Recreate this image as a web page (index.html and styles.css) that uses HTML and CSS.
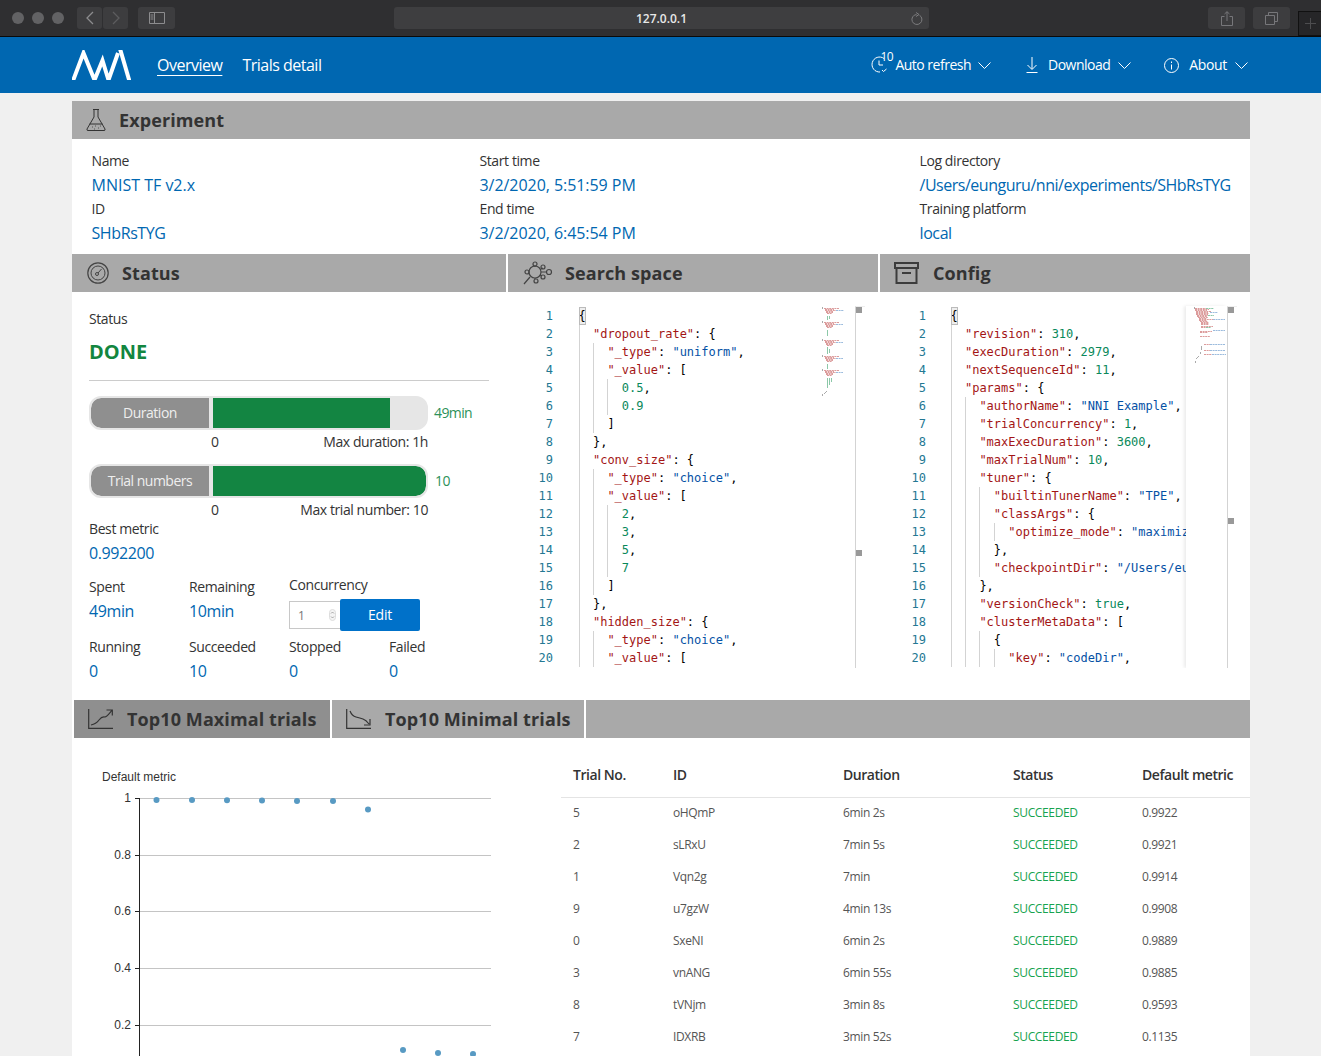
FILE: index.html
```html
<!DOCTYPE html>
<html lang="en">
<head>
<meta charset="utf-8">
<title>NNI</title>
<link rel="stylesheet" href="styles.css">
</head>
<body>
<header class="chrome">
  <div class="dots"><i></i><i></i><i></i></div>
  <div class="chrome-btn btn-nav"><svg width="12" height="14" viewBox="0 0 12 14"><path d="M9 1 3 7l6 6" fill="none" stroke="#8c8c8e" stroke-width="1.3"/></svg></div>
  <div class="chrome-btn btn-nav btn-next"><svg width="12" height="14" viewBox="0 0 12 14"><path d="m3 1 6 6-6 6" fill="none" stroke="#5c5c5e" stroke-width="1.3"/></svg></div>
  <div class="chrome-btn btn-side"><svg width="16" height="12" viewBox="0 0 16 12"><path d="M.5.5h15v11H.5zM5.5.5v11M1.5 3h3M1.5 5h3M1.5 7h3" fill="none" stroke="#8c8c8e"/></svg></div>
  <div class="address"><span>127.0.0.1</span><svg class="reload" width="12" height="13" viewBox="0 0 12 13"><path d="M8.5 3.2a5 5 0 1 1-3-.7M5 .5l3 2-3 2" fill="none" stroke="#7c7c7e"/></svg></div>
  <div class="chrome-btn btn-share"><svg width="12" height="15" viewBox="0 0 12 15"><path d="M3.5 5.5H.5v9h11v-9h-3M6 10V.8M3.5 3 6 .7 8.500 3" fill="none" stroke="#77777a"/></svg></div>
  <div class="chrome-btn btn-tabs"><svg width="13" height="13" viewBox="0 0 13 13"><path d="M.5 3.500h9v9h-9zM3.500 3.500v-3h9v9h-3" fill="none" stroke="#77777a"/></svg></div>
  <div class="newtab"><svg width="11" height="11" viewBox="0 0 11 11"><path d="M5.500 0v11M0 5.500h11" stroke="#4d4d4f"/></svg></div>
</header>

<nav class="nav">
  <svg class="logo" width="59" height="30" viewBox="0 0 59 30"><path d="M-1 36 11.500 3 22.500 30 30.500 10.500 36.500 30 46 3" fill="none" stroke="#fff" stroke-width="4"/><path d="M47.500-3 58 33" fill="none" stroke="#fff" stroke-width="4"/></svg>
  <a class="nav-link active">Overview</a>
  <a class="nav-link">Trials detail</a>
  <div class="nav-right">
    <div class="nav-item item-refresh">
      <span class="clock"><svg width="17" height="17" viewBox="0 0 17 17"><path d="M13 2.500A7.500 7.500 0 1 0 9 16M8 4.500V9h4M11 14l1.500 1.500L15.500 13" fill="none" stroke="#fff"/></svg><b class="clock-num">10</b></span>
      <span>Auto refresh</span>
      <svg class="chev" width="13" height="7" viewBox="0 0 13 7"><path d="m.5.500 6 6 6-6" fill="none" stroke="#fff"/></svg>
    </div>
    <div class="nav-item item-download">
      <svg width="12" height="16" viewBox="0 0 12 16"><path d="M6 0v12M1.500 8 6 12.500 10.500 8M.5 15.500h11" fill="none" stroke="#fff"/></svg>
      <span>Download</span>
      <svg class="chev" width="13" height="7" viewBox="0 0 13 7"><path d="m.5.500 6 6 6-6" fill="none" stroke="#fff"/></svg>
    </div>
    <div class="nav-item item-about">
      <svg width="15" height="15" viewBox="0 0 15 15"><circle cx="7.500" cy="7.500" r="7" fill="none" stroke="#fff"/><path d="M7.500 6.500V11.500M7.500 3.500v1.500" stroke="#fff"/></svg>
      <span>About</span>
      <svg class="chev" width="13" height="7" viewBox="0 0 13 7"><path d="m.5.500 6 6 6-6" fill="none" stroke="#fff"/></svg>
    </div>
  </div>
</nav>

<main class="page">
  <section>
    <h2 class="bar bar-exp">
      <svg class="ico-flask" width="20" height="24" viewBox="0 0 20 24"><path d="M7 1.500h6M8 1.500V9L1 21q-.5 1.500 1 1.500h16q1.500 0 1-1.500L12 9V1.500M3.500 16h13" fill="none" stroke="#333"/><path d="M6 19h1M9 18h1M12 20h1M14 18h1M8 21h1" stroke="#555"/></svg>
      Experiment
    </h2>
    <div class="exp-grid">
      <div class="lab">Name</div><div class="lab">Start time</div><div class="lab">Log directory</div>
      <div class="val val-wide">MNIST TF v2.x</div><div class="val val-date">3/2/2020, 5:51:59 PM</div><div class="val val-path">/Users/eunguru/nni/experiments/SHbRsTYG</div>
      <div class="lab">ID</div><div class="lab">End time</div><div class="lab">Training platform</div>
      <div class="val">SHbRsTYG</div><div class="val val-date">3/2/2020, 6:45:54 PM</div><div class="val">local</div>
    </div>
  </section>

  <div class="panels">
    <section class="panel-status">
      <h2 class="bar bar-status">
        <svg width="22" height="22" viewBox="0 0 22 22"><circle cx="11" cy="11" r="10.200" fill="none" stroke="#444" stroke-width="1.200"/><circle cx="11" cy="11" r="7" fill="none" stroke="#444"/><circle cx="10" cy="12" r="1.500" fill="none" stroke="#444"/><path d="m11 11 3.500-4" stroke="#444"/></svg>
        Status
      </h2>
      <div class="status-body">
        <div class="lab">Status</div>
        <div class="done">DONE</div>
        <hr class="rule">
        <div class="meter">
          <div class="track"><span class="track-name">Duration</span><span class="track-area"><span class="fill" style="width:83%"></span></span></div>
          <span class="meter-val">49min</span>
        </div>
        <div class="scale"><span>0</span><span>Max duration: 1h</span></div>
        <div class="meter meter-next">
          <div class="track"><span class="track-name">Trial numbers</span><span class="track-area"><span class="fill fill-full" style="width:100%"></span></span></div>
          <span class="meter-val meter-num">10</span>
        </div>
        <div class="scale"><span>0</span><span>Max trial number: 10</span></div>
        <div class="lab best-lab">Best metric</div>
        <div class="val">0.992200</div>
        <div class="stats stats-a">
          <div><div class="lab">Spent</div><div class="val">49min</div></div>
          <div><div class="lab">Remaining</div><div class="val">10min</div></div>
          <div class="conc">
            <div class="lab">Concurrency</div>
            <div class="conc-row">
              <div class="num-input"><span>1</span><svg width="7" height="12" viewBox="0 0 7 12"><rect x=".5" y=".5" width="6" height="11" rx="3" fill="#f4f4f4" stroke="#ddd"/><path d="m2 4.500 1.500-1.500L5 4.500M2 7.500 3.500 9 5 7.500" fill="none" stroke="#888" stroke-width=".7"/></svg></div>
              <button class="edit">Edit</button>
            </div>
          </div>
        </div>
        <div class="stats">
          <div><div class="lab">Running</div><div class="val">0</div></div>
          <div><div class="lab">Succeeded</div><div class="val">10</div></div>
          <div><div class="lab">Stopped</div><div class="val">0</div></div>
          <div><div class="lab">Failed</div><div class="val">0</div></div>
        </div>
      </div>
    </section>

    <section class="panel-code">
      <h2 class="bar bar-search">
        <svg width="30" height="24" viewBox="0 0 30 24" stroke-width="1.200"><circle cx="12" cy="11" r="6" fill="none" stroke="#444"/><circle cx="12" cy="3" r="2" fill="none" stroke="#444"/><circle cx="20" cy="6" r="2" fill="none" stroke="#444"/><circle cx="26" cy="11" r="2.500" fill="none" stroke="#444"/><circle cx="20" cy="16" r="2" fill="none" stroke="#444"/><circle cx="13" cy="20" r="2" fill="none" stroke="#444"/><circle cx="4" cy="11" r="2" fill="none" stroke="#444"/><path d="M7 16 1 23M18 8l2-1M18 11h6M17 14l2 1M12 5v1M12 17v1" stroke="#444" fill="none"/></svg>
        Search space
      </h2>
      <div class="editor">
        <div class="gutter"><div>1</div><div>2</div><div>3</div><div>4</div><div>5</div><div>6</div><div>7</div><div>8</div><div>9</div><div>10</div><div>11</div><div>12</div><div>13</div><div>14</div><div>15</div><div>16</div><div>17</div><div>18</div><div>19</div><div>20</div></div>
        <div class="code">
          <div class="ln"><span class="brace">{</span></div>
          <div class="ln"><i class="g"></i><span class="k">"dropout_rate"</span>: {</div>
          <div class="ln"><i class="g"></i><i class="g"></i><span class="k">"_type"</span>: <span class="s">"uniform"</span>,</div>
          <div class="ln"><i class="g"></i><i class="g"></i><span class="k">"_value"</span>: [</div>
          <div class="ln"><i class="g"></i><i class="g"></i><i class="g"></i><span class="n">0.5</span>,</div>
          <div class="ln"><i class="g"></i><i class="g"></i><i class="g"></i><span class="n">0.9</span></div>
          <div class="ln"><i class="g"></i><i class="g"></i>]</div>
          <div class="ln"><i class="g"></i>},</div>
          <div class="ln"><i class="g"></i><span class="k">"conv_size"</span>: {</div>
          <div class="ln"><i class="g"></i><i class="g"></i><span class="k">"_type"</span>: <span class="s">"choice"</span>,</div>
          <div class="ln"><i class="g"></i><i class="g"></i><span class="k">"_value"</span>: [</div>
          <div class="ln"><i class="g"></i><i class="g"></i><i class="g"></i><span class="n">2</span>,</div>
          <div class="ln"><i class="g"></i><i class="g"></i><i class="g"></i><span class="n">3</span>,</div>
          <div class="ln"><i class="g"></i><i class="g"></i><i class="g"></i><span class="n">5</span>,</div>
          <div class="ln"><i class="g"></i><i class="g"></i><i class="g"></i><span class="n">7</span></div>
          <div class="ln"><i class="g"></i><i class="g"></i>]</div>
          <div class="ln"><i class="g"></i>},</div>
          <div class="ln"><i class="g"></i><span class="k">"hidden_size"</span>: {</div>
          <div class="ln"><i class="g"></i><i class="g"></i><span class="k">"_type"</span>: <span class="s">"choice"</span>,</div>
          <div class="ln"><i class="g"></i><i class="g"></i><span class="k">"_value"</span>: [</div>
        </div>
        <div class="mini">
          <svg width="32" height="90" viewBox="0 0 32 90" fill="none"><path stroke="#dc9c9c" stroke-dasharray="2 .6" d="M2 2.500h15M3 3.500h9M3 4.500h11M4 5.500h7M4 6.500h7M5 7.500h5M2 16.500h15M3 17.500h9M3 18.500h11M4 19.500h7M4 20.500h7M5 21.500h5M2 34.500h15M3 35.500h9M3 36.500h11M4 37.500h7M4 38.500h7M5 39.500h5M2 50.500h15M3 51.500h9M3 52.500h11M4 53.500h7M4 54.500h7M5 55.500h5M2 64.500h15M3 65.500h9M3 66.500h11M4 67.500h7M4 68.500h7M5 69.500h5"/><path stroke="#9bbbdd" stroke-dasharray="2 .6" d="M14 4.500h8M14 18.500h7M14 36.500h7M14 52.500h7M14 66.500h7"/><path stroke="#8cc8a8" d="M5.500 10v4M7.500 10v3M5.500 24v6M5.500 41v7M7.500 43v4M5.500 58v5M5.500 72v10M7.500 72v7M9.500 72v4"/><path stroke="#aaa" d="M.5 1v2M.5 15v2M.5 33v2M.5 49v2M.5 63v2M5 85l-3 3M.5 88v2"/></svg>
        </div>
        <div class="scroll"><i class="thumb"></i><i class="thumb thumb-b"></i></div>
      </div>
    </section>

    <section class="panel-code">
      <h2 class="bar bar-config">
        <svg width="25" height="22" viewBox="0 0 25 22"><path d="M1 1h23v5H1zM2.500 6v15h20V6M8 11h9" fill="none" stroke="#3c3c3c" stroke-width="2"/></svg>
        Config
      </h2>
      <div class="editor editor-config">
        <div class="gutter"><div>1</div><div>2</div><div>3</div><div>4</div><div>5</div><div>6</div><div>7</div><div>8</div><div>9</div><div>10</div><div>11</div><div>12</div><div>13</div><div>14</div><div>15</div><div>16</div><div>17</div><div>18</div><div>19</div><div>20</div></div>
        <div class="code code-config">
          <div class="ln"><span class="brace">{</span></div>
          <div class="ln"><i class="g"></i><span class="k">"revision"</span>: <span class="n">310</span>,</div>
          <div class="ln"><i class="g"></i><span class="k">"execDuration"</span>: <span class="n">2979</span>,</div>
          <div class="ln"><i class="g"></i><span class="k">"nextSequenceId"</span>: <span class="n">11</span>,</div>
          <div class="ln"><i class="g"></i><span class="k">"params"</span>: {</div>
          <div class="ln"><i class="g"></i><i class="g"></i><span class="k">"authorName"</span>: <span class="s">"NNI Example"</span>,</div>
          <div class="ln"><i class="g"></i><i class="g"></i><span class="k">"trialConcurrency"</span>: <span class="n">1</span>,</div>
          <div class="ln"><i class="g"></i><i class="g"></i><span class="k">"maxExecDuration"</span>: <span class="n">3600</span>,</div>
          <div class="ln"><i class="g"></i><i class="g"></i><span class="k">"maxTrialNum"</span>: <span class="n">10</span>,</div>
          <div class="ln"><i class="g"></i><i class="g"></i><span class="k">"tuner"</span>: {</div>
          <div class="ln"><i class="g"></i><i class="g"></i><i class="g"></i><span class="k">"builtinTunerName"</span>: <span class="s">"TPE"</span>,</div>
          <div class="ln"><i class="g"></i><i class="g"></i><i class="g"></i><span class="k">"classArgs"</span>: {</div>
          <div class="ln"><i class="g"></i><i class="g"></i><i class="g"></i><i class="g"></i><span class="k">"optimize_mode"</span>: <span class="s">"maximiz</span></div>
          <div class="ln"><i class="g"></i><i class="g"></i><i class="g"></i>},</div>
          <div class="ln"><i class="g"></i><i class="g"></i><i class="g"></i><span class="k">"checkpointDir"</span>: <span class="s">"/Users/eu</span></div>
          <div class="ln"><i class="g"></i><i class="g"></i>},</div>
          <div class="ln"><i class="g"></i><i class="g"></i><span class="k">"versionCheck"</span>: <span class="n">true</span>,</div>
          <div class="ln"><i class="g"></i><i class="g"></i><span class="k">"clusterMetaData"</span>: [</div>
          <div class="ln"><i class="g"></i><i class="g"></i><i class="g"></i>{</div>
          <div class="ln"><i class="g"></i><i class="g"></i><i class="g"></i><i class="g"></i><span class="k">"key"</span>: <span class="s">"codeDir"</span>,</div>
        </div>
        <div class="mini mini-config">
          <svg width="41" height="62" viewBox="0 0 41 62" fill="none"><path stroke="#dc9c9c" stroke-dasharray="2 .6" d="M9 2.500h12M9 3.500h14M9 4.500h12M10 5.500h15M10 6.500h12M10 7.500h13M10 8.500h12M11 9.500h13M11 10.500h10M12 11.500h10M13 12.500h8M13 13.500h14M13 14.500h8M14 15.500h8M15 16.500h8M15 17.500h8M15 18.500h8M15 20.500h12M15 21.500h8M14 25.500h12M14 26.500h8M14 30.500h10M18 38.500h6M18 44.500h8M18 48.500h8"/><path stroke="#9bbbdd" stroke-dasharray="2 .6" d="M24 6.500h8M27 13.500h12M27 24.500h12M24 38.500h15M24 44.500h15M26 48.500h14"/><path stroke="#8cc8a8" stroke-dasharray="2 .6" d="M20 2.500h8M22 9.500h6M20 21.500h5"/><path stroke="#aaa" d="M8.500 1v2M15.500 40v4M14.500 46v2M13 50l-3 3M9.500 55v2"/></svg>
        </div>
        <div class="scroll"><i class="thumb"></i><i class="thumb thumb-c"></i></div>
      </div>
    </section>
  </div>

  <div class="tabs">
    <div class="tab tab-on">
      <svg width="26" height="20" viewBox="0 0 26 20"><path d="M.7 0v19.300H25M3 16q5-1 8-5t6-3q3-1 7-7M18.500 1h5.800v5.500" fill="none" stroke="#333" stroke-width="1.200"/></svg>
      Top10 Maximal trials
    </div>
    <div class="tab tab-off">
      <svg width="26" height="20" viewBox="0 0 26 20"><path d="M.7 0v19.300H25M4 2q2 5 6 6t7 2 6 5M24 10v6h-6" fill="none" stroke="#333" stroke-width="1.200"/></svg>
      Top10 Minimal trials
    </div>
  </div>

  <div class="trials">
    <div class="chart">
      <svg width="489" height="318" viewBox="0 0 489 318">
        <text class="chart-title" x="30" y="43">Default metric</text>
        <g class="grid-lines"><path d="M67 60.500h352M67 117.500h352M67 173.500h352M67 230.500h352M67 287.500h352"/></g>
        <path class="axis" d="M67.500 60v258M63 60.500h5M63 117.500h5M63 173.500h5M63 230.500h5M63 287.500h5"/>
        <g class="ticks"><text x="59" y="64">1</text><text x="59" y="121">0.8</text><text x="59" y="177">0.6</text><text x="59" y="234">0.4</text><text x="59" y="291">0.2</text></g>
        <g class="pts"><circle cx="84.500" cy="62" r="3"/><circle cx="120" cy="62" r="3"/><circle cx="155" cy="62.300" r="3"/><circle cx="190" cy="62.500" r="3"/><circle cx="225" cy="63" r="3"/><circle cx="261" cy="63" r="3"/><circle cx="296" cy="71.500" r="3"/><circle cx="331" cy="312" r="3"/><circle cx="366" cy="315" r="3"/><circle cx="401" cy="316" r="3"/></g>
      </svg>
    </div>
    <table class="tbl">
      <thead><tr><th class="c1">Trial No.</th><th class="c2">ID</th><th class="c3">Duration</th><th class="c4">Status</th><th>Default metric</th></tr></thead>
      <tbody>
        <tr><td>5</td><td>oHQmP</td><td>6min 2s</td><td class="ok">SUCCEEDED</td><td>0.9922</td></tr>
        <tr><td>2</td><td>sLRxU</td><td>7min 5s</td><td class="ok">SUCCEEDED</td><td>0.9921</td></tr>
        <tr><td>1</td><td>Vqn2g</td><td>7min</td><td class="ok">SUCCEEDED</td><td>0.9914</td></tr>
        <tr><td>9</td><td>u7gzW</td><td>4min 13s</td><td class="ok">SUCCEEDED</td><td>0.9908</td></tr>
        <tr><td>0</td><td>SxeNI</td><td>6min 2s</td><td class="ok">SUCCEEDED</td><td>0.9889</td></tr>
        <tr><td>3</td><td>vnANG</td><td>6min 55s</td><td class="ok">SUCCEEDED</td><td>0.9885</td></tr>
        <tr><td>8</td><td>tVNjm</td><td>3min 8s</td><td class="ok">SUCCEEDED</td><td>0.9593</td></tr>
        <tr><td>7</td><td>IDXRB</td><td>3min 52s</td><td class="ok">SUCCEEDED</td><td>0.1135</td></tr>
      </tbody>
    </table>
  </div>
</main>
</body>
</html>
```
FILE: styles.css
```css
* { box-sizing: border-box; }
html, body { margin: 0; padding: 0; height: 1056px; overflow: hidden; }
body { background: #f0f0f0; font-family: "Open Sans", "Noto Sans", sans-serif; font-size: 14px; color: #333; }

/* browser chrome */
.chrome { height: 37px; background: #2f2f31; border-bottom: 1px solid #0a0a0a; display: flex; align-items: center; padding-left: 12px; position: relative; }
.dots { display: flex; gap: 8px; }
.dots i { width: 12px; height: 12px; border-radius: 50%; background: #626264; }
.chrome-btn { height: 22px; background: #3d3d3f; border-radius: 3px; display: flex; align-items: center; justify-content: center; }
.btn-nav { width: 25px; margin-left: 13px; }
.btn-next { margin-left: 1px; }
.btn-side { width: 37px; margin-left: 10px; }
.address { width: 535px; height: 22px; margin-left: 219px; background: #3e3e40; border-radius: 3px; display: flex; align-items: center; justify-content: center; position: relative; color: #e8e8e8; font-size: 12px; font-weight: 600; }
.reload { position: absolute; right: 6px; top: 5px; }
.btn-share { width: 37px; margin-left: 279px; }
.btn-tabs { width: 37px; margin-left: 8px; }
.newtab { position: absolute; right: 0; bottom: 0; width: 23px; height: 25px; background: #262628; border: 1px solid #111; border-right: 0; display: flex; align-items: center; justify-content: center; }

/* nav */
.nav { height: 56px; background: #0067b1; color: #fff; display: flex; align-items: center; padding: 0 73px 0 72px; }
.logo { margin-right: 26px; margin-top: -1px; }
.nav-link { font-size: 16px; margin-right: 20px; padding-bottom: 1px; letter-spacing: -.5px; }
.nav-link.active { text-decoration: underline; text-underline-offset: 4px; text-decoration-thickness: 1px; }
.nav-right { margin-left: auto; display: flex; align-items: center; }
.nav-item { display: flex; align-items: center; font-size: 14px; letter-spacing: -.5px; }
.nav-item span { padding-bottom: 2px; }
.item-refresh .chev { margin-left: 7px; }
.item-download { margin-left: 35px; }
.item-download span { margin: 0 8px 0 10px; }
.item-about { margin-left: 33px; }
.item-about span { margin: 0 8px 0 10px; letter-spacing: -.35px; }
.clock { position: relative; display: flex; width: 24px; }
.clock-num { position: absolute; left: 9px; top: -8px; font-size: 12px; font-weight: 400; }

/* page */
.page { width: 1178px; margin: 8px 0 0 72px; background: #fff; height: 1000px; }
.bar { margin: 0; height: 38px; background: #a9a9a9; color: #333; font-size: 18px; font-weight: 700; display: flex; align-items: center; letter-spacing: .1px; }
.bar-exp { padding-left: 14px; gap: 13px; }
.bar-status { padding-left: 15px; gap: 13px; }
.bar-search { padding-left: 15px; gap: 12px; }
.bar-config { padding-left: 14px; gap: 14px; }
.lab { font-size: 14px; line-height: 24px; height: 24px; color: #333; letter-spacing: -.4px; white-space: nowrap; }
.val { font-size: 16px; line-height: 24px; height: 24px; color: #0067b1; letter-spacing: -.4px; white-space: nowrap; }
.val-date { letter-spacing: -.05px; }
.val-wide { letter-spacing: 0; }
.val-path { letter-spacing: -.48px; }
.exp-grid { display: grid; grid-template-columns: 388px 440px 1fr; padding: 10px 0 9px 19.5px; }
.panels { display: flex; gap: 2px; }
.panel-status { width: 434px; }
.panel-code { width: 370px; }

/* status */
.status-body { padding: 15px 0 0 17px; height: 391px; }
.done { height: 40px; line-height: 40px; margin-top: 1px; font-size: 20px; font-weight: 700; color: #13863f; }
.rule { margin: 8px 0 0; border: 0; border-top: 1px solid #ccc; width: 400px; height: 1px; }
.meter { display: flex; align-items: center; margin-top: 15px; }
.meter-next { margin-top: 10px; }
.track { width: 339px; height: 34px; border: 2px solid #e6e6e6; border-radius: 12px; background: #e6e6e6; display: flex; overflow: hidden; }
.track-name { width: 118px; background: #8f8f8f; color: #eee; text-align: center; line-height: 30px; font-size: 14px; letter-spacing: -.5px; border-radius: 10px 0 0 10px; }
.track-area { flex: 1; margin-left: 4px; display: flex; }
.fill { background: #138542; }
.fill-full { border-radius: 0 10px 10px 0; }
.meter-val { margin-left: 6px; padding-bottom: 2px; color: #2c9159; font-size: 14px; letter-spacing: -.6px; }
.meter-num { margin-left: 7px; }
.scale { width: 339px; height: 24px; line-height: 24px; padding-left: 122px; display: flex; justify-content: space-between; letter-spacing: -.42px; }
.best-lab { margin-top: -5px; }
.stats { display: grid; grid-template-columns: repeat(4, 100px); margin-top: 12px; }
.stats-a { margin-top: 10px; height: 48px; }
.conc { grid-column: span 2; margin-top: -2px; }
.conc-row { display: flex; align-items: center; height: 32px; margin-top: 2px; }
.num-input { width: 52px; height: 28px; border: 1px solid #c8c8c8; padding: 0 4px 0 8px; display: flex; align-items: center; justify-content: space-between; font-size: 12px; color: #777; }
.edit { width: 80px; height: 32px; border: 0; border-radius: 2px; padding: 0 0 2px; background: #0071c9; color: #fff; font: 500 14px "Open Sans", sans-serif; margin-left: -1px; letter-spacing: -.2px; }

/* code */
.editor { display: flex; height: 376px; padding-top: 15px; position: relative; font-family: "DejaVu Sans Mono", monospace; font-size: 12px; line-height: 18px; overflow: hidden; }
.gutter { width: 45px; text-align: right; color: #237893; flex: none; }
.editor-config .gutter { width: 46px; }
.code { margin-left: 25.5px; width: 276px; flex: none; overflow: hidden; color: #000; }
.code-config { margin-left: 24.5px; width: 235px; }
.ln { height: 18px; white-space: pre; }
.g { display: inline-block; width: 14.45px; height: 18px; border-left: 1px solid #d3d3d3; vertical-align: top; }
.brace { display: inline-block; height: 18px; outline: 1px solid #bbb; outline-offset: -1px; background: #eee; }
.k { color: #a31515; }
.s { color: #0451a5; }
.n { color: #09885a; }
.mini { position: absolute; left: 314px; top: 14px; width: 33px; height: 362px; }
.mini-config { left: 306px; width: 41px; background: #fff; box-shadow: -2px 0 3px rgba(0,0,0,.08); }
.scroll { position: absolute; left: 347px; top: 14px; width: 10px; height: 362px; border-left: 1px solid #d3d3d3; border-top: 1px solid #eee; }
.thumb { position: absolute; left: 0; top: 0; width: 6px; height: 6px; background: #999; }
.thumb-b { top: 243px; }
.thumb-c { top: 211px; }

/* bottom */
.tabs { display: flex; height: 38px; background: #a9a9a9; margin-top: 17px; border-left: 2px solid #fff; font-size: 18px; font-weight: 700; color: #333; letter-spacing: .1px; }
.tab { display: flex; align-items: center; gap: 13px; padding-left: 14px; height: 38px; border-right: 2px solid #fff; white-space: nowrap; }
.tab-on { width: 258px; background: #8f8f8f; }
.tab-off { width: 254px; }
.trials { display: flex; }
.chart { width: 489px; flex: none; }
.chart svg { display: block; }
.chart-title { font: 12px "Liberation Sans", sans-serif; fill: #333; }
.ticks text { font: 12px "Liberation Sans", sans-serif; fill: #333; text-anchor: end; }
.grid-lines path { stroke: #c4c4c4; fill: none; }
.axis { stroke: #222; fill: none; }
.pts circle { fill: #589ac3; }
.tbl { border-collapse: collapse; table-layout: fixed; width: 689px; margin-top: 17px; align-self: flex-start; }
.tbl th { height: 42px; text-align: left; padding: 0 0 3px 12px; font-size: 14px; font-weight: 600; color: #333; border-bottom: 1px solid #e4e4e4; letter-spacing: -.45px; white-space: nowrap; }
.tbl td { height: 32px; padding: 0 0 2px 12px; font-size: 12px; color: #555; letter-spacing: -.35px; }
.c1 { width: 100px; }
.c2, .c3 { width: 170px; }
.c4 { width: 129px; }
.tbl .ok { color: #17a34f; }
```
